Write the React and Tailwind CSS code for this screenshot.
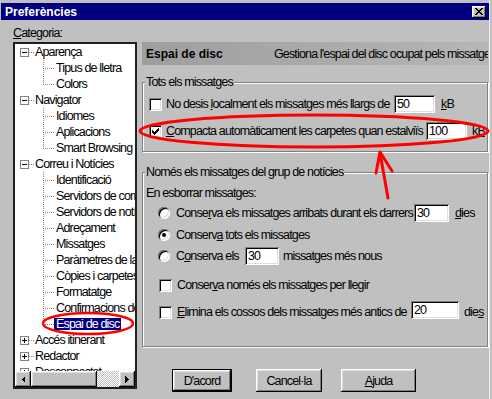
import React from "react";

const raised =
  "shadow-[inset_-1px_-1px_0_#000,inset_1px_1px_0_#fff,inset_-2px_-2px_0_#808080,inset_2px_2px_0_#dfdfdf]";
const sunken =
  "shadow-[inset_1px_1px_0_#808080,inset_-1px_-1px_0_#fff,inset_2px_2px_0_#000,inset_-2px_-2px_0_#dfdfdf]";

function Check({ checked }) {
  const px = [
    [6, 0, 1],
    [5, 1, 2],
    [0, 2, 1],
    [4, 2, 3],
    [0, 3, 2],
    [3, 3, 3],
    [0, 4, 5],
    [1, 5, 3],
    [2, 6, 1],
  ];
  return (
    <span className={"w-[13px] h-[13px] shrink-0 bg-white flex items-center justify-center " + sunken}>
      {checked && (
        <svg width="7" height="7" shapeRendering="crispEdges">
          {px.map(([x, y, w], i) => (
            <rect key={i} x={x} y={y} width={w} height="1" fill="#000" />
          ))}
        </svg>
      )}
    </span>
  );
}

function Radio({ checked }) {
  return (
    <span
      className={
        "w-[12px] h-[12px] shrink-0 rounded-full bg-white flex items-center justify-center shadow-[inset_1px_1px_0_#808080,inset_-1px_-1px_0_#fff,inset_2px_2px_0_#000,inset_-2px_-2px_0_#dfdfdf]"
      }
    >
      {checked && <span className="w-[4px] h-[4px] rounded-full bg-black" />}
    </span>
  );
}

function Field({ className, children }) {
  return (
    <span className={"h-[18px] shrink-0 bg-white flex items-center pl-[3px] " + sunken + " " + className}>
      {children}
    </span>
  );
}

const tree = [
  { l: 0, t: "Aparença", e: "-" },
  { l: 1, t: "Tipus de lletra" },
  { l: 1, t: "Colors", last: true },
  { l: 0, t: "Navigator", e: "-" },
  { l: 1, t: "Idiomes" },
  { l: 1, t: "Aplicacions" },
  { l: 1, t: "Smart Browsing", last: true },
  { l: 0, t: "Correu i Notícies", e: "-" },
  { l: 1, t: "Identificació" },
  { l: 1, t: "Servidors de correu" },
  { l: 1, t: "Servidors de notícies" },
  { l: 1, t: "Adreçament" },
  { l: 1, t: "Missatges" },
  { l: 1, t: "Paràmetres de la còpia" },
  { l: 1, t: "Còpies i carpetes" },
  { l: 1, t: "Formatatge" },
  { l: 1, t: "Confirmacions de recepció" },
  { l: 1, t: "Espai de disc", last: true, sel: true },
  { l: 0, t: "Accés itinerant", e: "+" },
  { l: 0, t: "Redactor", e: "+" },
  { l: 0, t: "Desconnectat", e: "+" },
];

function TreeRow({ r }) {
  if (r.l === 0) {
    return (
      <div className="h-[16px] flex items-center whitespace-nowrap shrink-0">
        <svg width="20" height="16" className="shrink-0" shapeRendering="crispEdges">
          <line x1="14" y1="8.5" x2="19" y2="8.5" stroke="#808080" strokeDasharray="1 1" />
          <rect x="5.5" y="4.5" width="8" height="8" fill="#fff" stroke="#808080" />
          <line x1="7" y1="8.5" x2="12" y2="8.5" stroke="#000" />
          {r.e === "+" && <line x1="9.5" y1="6" x2="9.5" y2="11" stroke="#000" />}
        </svg>
        <span className="leading-[13px]">{r.t}</span>
      </div>
    );
  }
  return (
    <div className="h-[16px] flex items-center whitespace-nowrap shrink-0">
      <svg width="39" height="16" className="shrink-0" shapeRendering="crispEdges">
        <line x1="28.5" y1="0" x2="28.5" y2={r.last ? 9 : 16} stroke="#808080" strokeDasharray="1 1" />
        <line x1="30" y1="8.5" x2="39" y2="8.5" stroke="#808080" strokeDasharray="1 1" />
      </svg>
      <span className={"px-[2px] leading-[12px] " + (r.sel ? "bg-[#000080] text-white" : "")}>{r.t}</span>
    </div>
  );
}

function Button({ className, def, children }) {
  if (def) {
    return (
      <div className={"h-[23px] shrink-0 border border-black flex " + className}>
        <div className={"flex-1 flex items-center justify-center bg-[#c0c0c0] " + raised}>{children}</div>
      </div>
    );
  }
  return (
    <div className={"h-[23px] shrink-0 flex items-center justify-center bg-[#c0c0c0] " + raised + " " + className}>
      {children}
    </div>
  );
}

const fieldset =
  "border border-[#808080] shadow-[inset_1px_1px_0_#fff,1px_1px_0_#fff] p-0 m-0 min-w-0 w-[346px]";

export default function App() {
  return (
    <div className="relative w-[492px] h-[399px] overflow-hidden bg-[#c0c0c0] text-black font-['Liberation_Sans',Arial,sans-serif] text-[12.5px] leading-[14px] tracking-[-0.85px]">
      <div className="flex h-full">
        <div className="w-[489px] shrink-0 flex flex-col pt-[3px] pl-[1px]">
          {/* title bar */}
          <div className="h-[17px] shrink-0 bg-[#000080] flex items-center justify-between pl-[4px] pr-[3px]">
            <span className="text-white font-bold text-[12px] tracking-normal">Preferències</span>
            <span className={"w-[14px] h-[12px] bg-[#c0c0c0] flex items-center justify-center " + raised}>
              <svg width="8" height="7" shapeRendering="crispEdges">
                <path d="M0 0L7 7M1 0L8 7M7 0L0 7M8 0L1 7" stroke="#000" strokeWidth="1" />
              </svg>
            </span>
          </div>

          {/* body */}
          <div className="flex flex-1">
            {/* left column */}
            <div className="ml-[12px] w-[124px] shrink-0 flex flex-col pt-[6px]">
              <div className="h-[14px]">
                <span className="underline">C</span>ategoria:
              </div>
              <div className="mt-[2px] h-[347px] border-2 border-[#202020] bg-white flex flex-col">
                <div className="flex-1 overflow-hidden flex flex-col">
                  {tree.map((r, i) => (
                    <TreeRow key={i} r={r} />
                  ))}
                </div>
                <div className="h-[16px] shrink-0 flex">
                  <div className={"w-[16px] h-full bg-[#c0c0c0] flex items-center justify-center " + raised}>
                    <svg width="4" height="7" shapeRendering="crispEdges">
                      <polygon points="4,0 4,7 0.5,3.5" fill="#000" />
                    </svg>
                  </div>
                  <div className={"w-[66px] h-full bg-[#c0c0c0] " + raised} />
                  <div className="flex-1 h-full [background-image:repeating-conic-gradient(#c0c0c0_0%_25%,#ffffff_0%_50%)] [background-size:2px_2px]" />
                  <div className={"w-[16px] h-full bg-[#c0c0c0] flex items-center justify-center " + raised}>
                    <svg width="4" height="7" shapeRendering="crispEdges">
                      <polygon points="0,0 0,7 3.5,3.5" fill="#000" />
                    </svg>
                  </div>
                </div>
              </div>
            </div>

            {/* right panel */}
            <div className="ml-[5px] w-[346px] shrink-0 flex flex-col pt-[22px]">
              <div className="h-[23px] shrink-0 bg-linear-to-r from-[#9e9e9e] to-[#b6b6b6] flex items-center pl-[4px] overflow-hidden whitespace-nowrap">
                <span className="w-[128px] shrink-0 font-bold text-[12px] tracking-normal">Espai de disc</span>
                <span>Gestiona l'espai del disc ocupat pels missatges</span>
              </div>

              <fieldset className={fieldset + " mt-[10px] pb-[10px]"}>
                <legend className="ml-[2px] px-[1px] bg-[#c0c0c0] leading-[14px]">Tots els missatges</legend>
                <div className="mt-[5px] h-[20px] flex items-center whitespace-nowrap">
                  <span className="ml-[6px]">
                    <Check />
                  </span>
                  <span className="ml-[4px] w-[228px] shrink-0">
                    No desis <span className="underline">l</span>ocalment els missatges més llargs de
                  </span>
                  <Field className="w-[41px]">50</Field>
                  <span className="ml-[6px]">
                    <span className="underline">k</span>B
                  </span>
                </div>
                <div className="mt-[7px] h-[20px] flex items-center whitespace-nowrap">
                  <span className="ml-[6px]">
                    <Check checked />
                  </span>
                  <span className="ml-[4px] w-[260px] shrink-0">
                    <span className="underline">C</span>ompacta automàticament les carpetes quan estalviïs
                  </span>
                  <Field className="w-[41px]">100</Field>
                  <span className="ml-[5px]">
                    k<span className="underline">B</span>
                  </span>
                </div>
              </fieldset>

              <fieldset className={fieldset + " mt-[13px] pb-[24px]"}>
                <legend className="ml-[2px] px-[1px] bg-[#c0c0c0] leading-[14px]">
                  Només els missatges del grup de notícies
                </legend>
                <div className="mt-[7px] h-[14px] ml-[3px]">En esborrar missatges:</div>
                <div className="mt-[3px] h-[20px] flex items-center whitespace-nowrap">
                  <span className="ml-[15px]">
                    <Radio />
                  </span>
                  <span className="ml-[6px] w-[238px] shrink-0">
                    Conse<span className="underline">r</span>va els missatges arribats durant els darrers
                  </span>
                  <Field className="w-[35px]">30</Field>
                  <span className="ml-[6px]">
                    <span className="underline">d</span>ies
                  </span>
                </div>
                <div className="mt-[2px] h-[20px] flex items-center whitespace-nowrap">
                  <span className="ml-[15px]">
                    <Radio checked />
                  </span>
                  <span className="ml-[6px]">
                    Conserv<span className="underline">a</span> tots els missatges
                  </span>
                </div>
                <div className="mt-[1px] h-[20px] flex items-center whitespace-nowrap">
                  <span className="ml-[15px]">
                    <Radio />
                  </span>
                  <span className="ml-[6px] w-[69px] shrink-0">
                    C<span className="underline">o</span>nserva els
                  </span>
                  <Field className="w-[34px]">30</Field>
                  <span className="ml-[4px]">missatges més nous</span>
                </div>
                <div className="mt-[9px] h-[20px] flex items-center whitespace-nowrap">
                  <span className="ml-[16px]">
                    <Check />
                  </span>
                  <span className="ml-[5px]">
                    Conser<span className="underline">v</span>a només els missatges per llegir
                  </span>
                </div>
                <div className="mt-[7px] h-[20px] flex items-center whitespace-nowrap">
                  <span className="ml-[16px]">
                    <Check />
                  </span>
                  <span className="ml-[5px] w-[234px] shrink-0">
                    <span className="underline">E</span>limina els cossos dels missatges més antics de
                  </span>
                  <span className="-mt-[4px]">
                    <Field className="w-[48px]">20</Field>
                  </span>
                  <span className="ml-[5px]">
                    die<span className="underline">s</span>
                  </span>
                </div>
              </fieldset>

              <div className="mt-[22px] flex">
                <Button def className="ml-[30px] w-[60px]">
                  D'acord
                </Button>
                <Button className="ml-[24px] w-[66px]">Cancel·la</Button>
                <Button className="ml-[19px] w-[75px]">
                  <span className="underline">A</span>juda
                </Button>
              </div>
            </div>
          </div>
        </div>
        <div className="w-[1px] bg-[#ececec]" />
      </div>

      {/* red hand-drawn annotations */}
      <svg className="absolute left-0 top-0 pointer-events-none" width="492" height="399">
        <ellipse cx="88" cy="323.5" rx="45" ry="10.5" fill="none" stroke="#ff0000" strokeWidth="2.5" />
        <ellipse cx="314" cy="131" rx="174" ry="16" fill="none" stroke="#ff0000" strokeWidth="3" />
        <path d="M388 198 L380 153" stroke="#ff0000" strokeWidth="3" fill="none" strokeLinecap="round" />
        <path d="M376 173 L380 152 L392 171" stroke="#ff0000" strokeWidth="3" fill="none" strokeLinecap="round" strokeLinejoin="round" />
      </svg>
    </div>
  );
}
